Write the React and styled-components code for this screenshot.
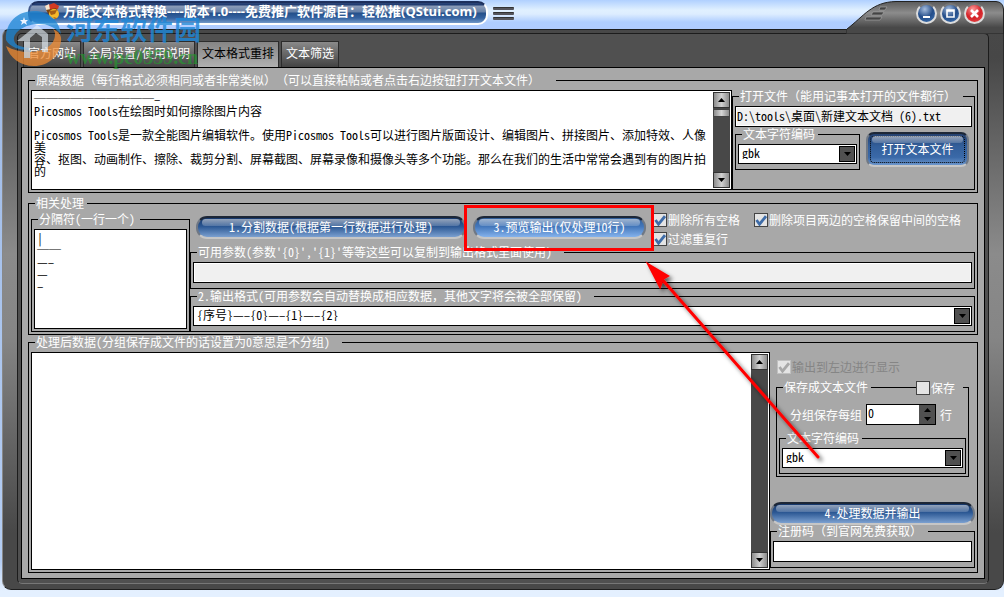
import React from "react";
import styled, { createGlobalStyle, css } from "styled-components";

const Global = createGlobalStyle`
  * { box-sizing: border-box; }
  html, body { margin: 0; padding: 0; }
  body { text-spacing-trim: space-all; }
  body, button, input, select, textarea {
    font-family: "Noto Sans Mono CJK SC", "Noto Sans CJK SC", monospace;
    font-size: 12px;
    line-height: 12px;
  }
`;

const Desktop = styled.div`
  position: relative;
  display: flex;
  flex-direction: column;
  min-height: 100vh;
  padding: 0 0 7px 2px;
  background:
    linear-gradient(180deg, #b0d0ff 0, #e0f0ff 10px, #ddedff 14px, #b0ceff 22px, #b0ccff 29px, transparent 29px),
    linear-gradient(180deg, #9db9e6 0, #b4cdf3 94%, #e4f0ff 99%);
  overflow: hidden;
`;

const TitleBar = styled.header`
  position: relative;
  display: flex;
  align-items: flex-start;
  height: 29px;
  padding: 1px 19px 0 26px;
`;

const TitlePill = styled.h1`
  display: flex;
  align-items: center;
  width: 460px;
  height: 24px;
  margin: 0;
  padding: 0 0 4px 14px;
  gap: 3px;
  border: 2px solid #fff;
  border-top-color: #1d2f5c;
  border-left-color: #42598c;
  border-radius: 10px;
  background: linear-gradient(180deg, #2c4577 0, #1e3a70 2px, #8c9cb8 3px, #6580a8 9px, #244f8a 10px, #3462a0 15px, #7298c8 20px);
  color: #fff;
  font: bold 13px/16px "Open Sans", "Noto Sans CJK SC", sans-serif;
  white-space: nowrap;
`;

const MenuButton = styled.button`
  display: flex;
  flex-direction: column;
  gap: 2px;
  width: 21px;
  margin: 6px 0 0 5px;
  padding: 0;
  border: 0;
  background: none;
`;

const MenuBar = styled.span`
  height: 3px;
  border-radius: 1px;
  background: #55555c;
  border-top: 1px solid #333;
`;

const Wing = styled.svg`
  position: absolute;
  right: 0;
  top: 0;
  width: 158px;
  height: 34px;
`;

const Controls = styled.div`
  position: relative;
  display: flex;
  gap: 3px;
  margin: 2px 0 0 auto;
`;

const RoundButton = styled.button`
  width: 21px;
  height: 21px;
  padding: 0;
  border: 2px solid #dcdcdc;
  border-top-color: #777;
  border-radius: 50%;
  background: ${(p) =>
    p.$close
      ? "radial-gradient(circle at 40% 25%, #ff9a9a, #d32127 50%, #e84c4c)"
      : "radial-gradient(circle at 40% 25%, #a6bddd, #244d89 50%, #4278b8)"};
  svg { display: block; }
`;

const Frame = styled.div`
  flex: 1;
  display: flex;
  padding: 3px 14px 5px 14px;
  border: 1px solid #1e1e1e;
  border-left-color: #888;
  border-right: 1px solid #2b2b2b;
  border-radius: 7px 0 9px 9px;
  background: linear-gradient(180deg, #484848 0, #474747 5%, #8b8b8b 40%, #858585 55%, #484848 90%);
`;

const Inner = styled.main`
  flex: 1;
  min-width: 0;
  display: flex;
  flex-direction: column;
  padding: 7px 3px 4px;
  border: 1px solid #1c1c1c;
  border-bottom-color: #777;
  border-radius: 5px;
  background: #505050;
`;

const Tabs = styled.nav`
  display: flex;
  gap: 2px;
  padding-left: 2px;
`;

const Tab = styled.button`
  height: 26px;
  padding: 0 4px 3px;
  border: 1px solid #2c2c2c;
  border-bottom: 0;
  color: ${(p) => (p.$active ? "#000" : "#fff")};
  background: ${(p) =>
    p.$active
      ? "linear-gradient(180deg, #858585, #b0b0b0)"
      : "linear-gradient(180deg, #8a8a8a, #6c6c6c 40%, #434343)"};
  white-space: nowrap;
`;

const Page = styled.section`
  flex: 1;
  display: flex;
  flex-direction: column;
  padding: 6px 6px 5px;
  border: 1px solid #000;
  background: #a8a8a8;
`;

const Group = styled.fieldset`
  position: relative;
  min-width: 0;
  margin: 0;
  padding: 4px 2px ${(p) => (p.$roomy ? 5 : 2)}px;
  border: 1px solid #000;
  ${(p) => p.$width && css`width: ${p.$width}px;`}
  ${(p) => p.$grow && css`flex: 1;`}
  ${(p) => p.$below && css`margin-bottom: ${p.$below}px;`}
`;

const Legend = styled.legend`
  height: 12px;
  margin-left: 4px;
  padding: 0 ${(p) => p.$tail || 3}px 0 1px;
  color: #fff;
  white-space: nowrap;
`;

const Row = styled.div`
  display: flex;
  height: 100%;
`;

const Column = styled.div`
  display: flex;
  flex-direction: column;
  min-width: 0;
  ${(p) => p.$grow && css`flex: 1;`}
  ${(p) => p.$width && css`width: ${p.$width}px;`}
`;

const TextPane = styled.div`
  flex: 1;
  display: flex;
  min-width: 0;
  min-height: ${(p) => p.$height || 0}px;
  padding: 1px;
  border: 1px solid #000;
  background: #fff;
`;

const TextArea = styled.textarea`
  flex: 1;
  min-width: 0;
  padding: 1px;
  border: 0;
  outline: 0;
  resize: none;
  overflow: hidden;
  white-space: pre;
  color: #000;
  background: #fff;
`;

const Scroll = styled.div`
  display: flex;
  flex-direction: column;
  justify-content: space-between;
  width: 17px;
  background: #484848;
`;

const ScrollTop = styled.div`
  display: flex;
  flex-direction: column;
  gap: 1px;
`;

const ScrollButton = styled.button`
  display: flex;
  align-items: center;
  justify-content: center;
  width: 17px;
  height: 16px;
  padding: 0;
  border: 1px solid #333;
  background: linear-gradient(90deg, #8c8c8c, #d0d0d0 50%, #8c8c8c);
`;

const Thumb = styled.div`
  height: 8px;
  border: 1px solid #444;
  background: linear-gradient(90deg, #8c8c8c, #d6d6d6 50%, #8c8c8c);
`;

const Input = styled.input`
  width: 100%;
  height: 21px;
  padding: 0 1px 2px;
  border: 1px solid #000;
  border-radius: 0;
  outline: 1px solid #fff;
  outline-offset: -2px;
  color: #000;
  background: ${(p) => (p.readOnly ? "#f0f0f0" : "#fff")};
`;

const SelectBox = styled.div`
  position: relative;
  height: 20px;
`;

const Select = styled.select`
  appearance: none;
  display: block;
  width: 100%;
  height: 20px;
  padding: 0 20px 2px 3px;
  border: 1px solid #000;
  border-radius: 0;
  color: #000;
  background: #fff;
`;

const DropMark = styled.span`
  position: absolute;
  top: 2px;
  right: 2px;
  display: flex;
  align-items: center;
  justify-content: center;
  width: 16px;
  height: 16px;
  border: 1px solid #000;
  background: #505050;
  pointer-events: none;
`;

const GlossButton = styled.button`
  position: relative;
  height: ${(p) => (p.$tall ? 35 : 23)}px;
  ${(p) => p.$width && css`width: ${p.$width}px;`}
  padding: 0 0 2px;
  border: 2px solid #c6c6c6;
  border-top-color: #1d2737;
  border-left-color: #6f7885;
  border-right-color: #6f7885;
  border-radius: ${(p) => (p.$tall ? 8 : 11)}px;
  color: #fff;
  white-space: nowrap;
  background: ${(p) =>
    p.$light
      ? "linear-gradient(180deg, #2f5d99, #4377bb 45%, #84b2ec)"
      : p.$tall
      ? "linear-gradient(180deg, #24406f, #335f9b 40%, #3a69a8 75%, #6c96cc)"
      : "linear-gradient(180deg, #16386c, #2c5894 45%, #7ba0d0)"};
  &::before {
    content: "";
    position: absolute;
    left: 4px;
    right: 4px;
    top: ${(p) => (p.$tall ? 2 : 1)}px;
    height: 7px;
    border-radius: 4px;
    background: linear-gradient(180deg, #ffffff88, #ffffff30);
  }
  ${(p) => p.$tall && css`
    outline: 1px dotted #000;
    outline-offset: -5px;
  `}
  span { position: relative; }
`;

const Actions = styled.div`
  display: flex;
  align-items: flex-start;
  height: 33px;
  padding-left: 6px;
`;

const ActionSlot = styled.div`
  position: relative;
  margin: 3px 7px 0 0;
`;

const Highlight = styled.span`
  position: absolute;
  z-index: 2;
  inset: -11px -8px -12px -9px;
  border: 3px solid #f00;
  pointer-events: none;
`;

const Checks = styled.div`
  display: grid;
  grid-template-columns: 87px auto;
  gap: 5px 14px;
`;

const CheckLabel = styled.label`
  display: flex;
  align-items: center;
  gap: 1px;
  height: 14px;
  color: ${(p) => (p.$disabled ? "#858585" : "#fff")};
  white-space: nowrap;
  ${(p) => p.$indent && css`margin: 8px 0 7px 7px;`}
`;

const tick = `url("data:image/svg+xml,%3Csvg xmlns='http://www.w3.org/2000/svg' viewBox='0 0 12 12'%3E%3Cpath d='M1.5 6l3 4.2L11 2.2' fill='none' stroke='COLOR' stroke-width='2.8'/%3E%3C/svg%3E")`;

const Check = styled.input`
  appearance: none;
  flex: none;
  width: 14px;
  height: 14px;
  margin: 0;
  border: 1px solid #444;
  background-color: #e4e4e4;
  &:checked { background-image: ${tick.replace("COLOR", "%233e6ca8")}; }
  &:disabled {
    border-color: #c0c0c0;
    background-image: ${tick.replace("COLOR", "%23a8a8a8")};
  }
`;

const SaveToggle = styled(CheckLabel)`
  position: absolute;
  right: 5px;
  top: -12px;
  padding-right: 8px;
  background: #a8a8a8;
`;

const SpinRow = styled.label`
  display: flex;
  align-items: center;
  height: 21px;
  margin: 7px 0;
  padding-left: 11px;
  gap: 4px;
  color: #fff;
`;

const Spin = styled.span`
  display: flex;
  width: 70px;
  height: 21px;
  border: 1px solid #000;
  background: #fff;
  input {
    flex: 1;
    min-width: 0;
    padding: 0 1px 4px;
    border: 0;
    outline: 0;
  }
`;

const SpinMark = styled.span`
  display: flex;
  flex-direction: column;
  align-items: center;
  justify-content: space-around;
  width: 16px;
  background: #505050;
`;

const OpenRow = styled.div`
  display: flex;
  gap: 6px;
  padding-top: 1px;
`;

const OpenSlot = styled.div`
  padding-top: 4px;
`;

const SaveBox = styled.div`
  margin: 0 6px 25px;
`;

const Arrow = styled.svg`
  position: absolute;
  z-index: 3;
  left: 640px;
  top: 255px;
  width: 190px;
  height: 215px;
  pointer-events: none;
`;

const Watermark = styled.div`
  position: absolute;
  z-index: 4;
  left: 5px;
  top: 10px;
  display: flex;
  gap: 4px;
  pointer-events: none;
`;

const MarkName = styled.div`
  height: 38px;
  color: #1e87d8d0;
  font: bold 27px/38px "Noto Sans CJK SC", sans-serif;
  white-space: nowrap;
`;

const MarkSite = styled.div`
  color: #239a2fa8;
  font: bold 20px/18px "Liberation Serif", serif;
`;

const Tri = ({ up }) => (
  <svg width="7" height="4" viewBox="0 0 7 4" aria-hidden="true">
    <path d={up ? "M0 4L3.5 0L7 4Z" : "M0 0L3.5 4L7 0Z"} fill="#000" />
  </svg>
);

const ScrollBar = ({ thumb }) => (
  <Scroll>
    <ScrollTop>
      <ScrollButton aria-label="向上"><Tri up /></ScrollButton>
      {thumb && <Thumb />}
    </ScrollTop>
    <ScrollButton aria-label="向下"><Tri /></ScrollButton>
  </Scroll>
);

const DropDown = ({ label, value }) => (
  <SelectBox>
    <Select aria-label={label} defaultValue={value}>
      <option>{value}</option>
    </Select>
    <DropMark><Tri /></DropMark>
  </SelectBox>
);

const CheckBox = ({ label, as: Label = CheckLabel, indent, ...rest }) => (
  <Label $disabled={rest.disabled} $indent={indent}>
    <Check type="checkbox" {...rest} />
    {label}
  </Label>
);

const SOURCE = [
  "─".repeat(10) + "–",
  "Picosmos Tools在绘图时如何擦除图片内容",
  "",
  "Picosmos Tools是一款全能图片编辑软件。使用Picosmos Tools可以进行图片版面设计、编辑图片、拼接图片、添加特效、人像",
  "美",
  "容、抠图、动画制作、擦除、裁剪分割、屏幕截图、屏幕录像和摄像头等多个功能。那么在我们的生活中常常会遇到有的图片拍",
  "的",
].join("\n");

const SEPARATORS = "|\n──\n—–\n—\n–";

export default function App() {
  return (
    <>
      <Global />
      <Desktop>
        <TitleBar>
          <Wing viewBox="0 0 158 34" aria-hidden="true">
            <defs>
              <linearGradient id="wing" x1="0" y1="0" x2="0" y2="1">
                <stop offset="0" stopColor="#5a5a5a" />
                <stop offset="0.35" stopColor="#8c8c8c" />
                <stop offset="0.8" stopColor="#484848" />
              </linearGradient>
            </defs>
            <path d="M0 30L1 29C18 16 26 2 50 1.500H150Q157 2 157.500 9V34H0Z" fill="url(#wing)" stroke="#222" />
            <path d="M34 7h7l-2 3h-6zM27 12h11l-2 3h-11zM20 17h16l-2 3h-15z" fill="#444" stroke="#aaa" strokeWidth="0.6" />
          </Wing>
          <TitlePill>
            <svg width="16" height="18" viewBox="0 0 16 18" aria-hidden="true">
              <path d="M1 4L10 1l5 3-1 3-10 2z" fill="#d33a22" />
              <path d="M1 4l4-2 1 6-3 2z" fill="#f4e5cf" />
              <path d="M2 8l10-2 2 3-9 4z" fill="#7a4514" />
              <circle cx="10" cy="12" r="5" fill="#f5b82a" />
              <path d="M5 9l8-1-2 4-4 1zM9 15l4 1-2 1z" fill="#a65f14" />
            </svg>
            万能文本格式转换----版本1.0----免费推广软件源自：轻松推(QStui.com)
          </TitlePill>
          <MenuButton aria-label="菜单"><MenuBar /><MenuBar /><MenuBar /></MenuButton>
          <Controls>
            <RoundButton aria-label="最小化">
              <svg width="17" height="17" viewBox="0 0 17 17"><path d="M5 11h7v2H5z" fill="#fff" /></svg>
            </RoundButton>
            <RoundButton aria-label="最大化">
              <svg width="17" height="17" viewBox="0 0 17 17"><path d="M5 5h7v7H5zM5 6h7" fill="none" stroke="#fff" strokeWidth="1.6" /></svg>
            </RoundButton>
            <RoundButton $close aria-label="关闭">
              <svg width="17" height="17" viewBox="0 0 17 17"><path d="M5 5l7 7M12 5l-7 7" stroke="#fff" strokeWidth="2.600" /></svg>
            </RoundButton>
          </Controls>
        </TitleBar>

        <Frame>
          <Inner>
            <Tabs>
              <Tab>官方网站</Tab>
              <Tab>全局设置/使用说明</Tab>
              <Tab $active>文本格式重排</Tab>
              <Tab>文本筛选</Tab>
            </Tabs>
            <Page>
              <Group $below={4}>
                <Legend $tail={16}>原始数据（每行格式必须相同或者非常类似）（可以直接粘帖或者点击右边按钮打开文本文件）</Legend>
                <Row>
                  <TextPane $height={100}>
                    <TextArea aria-label="原始数据" defaultValue={SOURCE} />
                    <ScrollBar thumb />
                  </TextPane>
                  <Group $width={243}>
                    <Legend $tail={7}>打开文件（能用记事本打开的文件都行）</Legend>
                    <Input aria-label="打开文件" readOnly value="D:\tools\桌面\新建文本文档 (6).txt" />
                    <OpenRow>
                      <Group $width={125} $roomy>
                        <Legend>文本字符编码</Legend>
                        <DropDown label="文本字符编码" value="gbk" />
                      </Group>
                      <OpenSlot>
                        <GlossButton $tall $width={103}><span>打开文本文件</span></GlossButton>
                      </OpenSlot>
                    </OpenRow>
                  </Group>
                </Row>
              </Group>

              <Group $below={1}>
                <Legend>相关处理</Legend>
                <Row>
                  <Group $width={159}>
                    <Legend $tail={5}>分隔符(一行一个)</Legend>
                    <Row>
                      <TextPane>
                        <TextArea aria-label="分隔符" defaultValue={SEPARATORS} />
                      </TextPane>
                    </Row>
                  </Group>
                  <Column $grow>
                    <Actions>
                      <ActionSlot>
                        <GlossButton $width={270}><span>1.分割数据(根据第一行数据进行处理)</span></GlossButton>
                      </ActionSlot>
                      <ActionSlot>
                        <GlossButton $light $width={173}><span>3.预览输出(仅处理10行)</span></GlossButton>
                        <Highlight />
                      </ActionSlot>
                      <Checks>
                        <CheckBox label="删除所有空格" defaultChecked />
                        <CheckBox label="删除项目两边的空格保留中间的空格" defaultChecked />
                        <CheckBox label="过滤重复行" defaultChecked />
                      </Checks>
                    </Actions>
                    <Group $roomy $below={1}>
                      <Legend $tail={12}>可用参数(参数'{"{0}"}','{"{1}"}'等等这些可以复制到输出格式里面使用)</Legend>
                      <Input aria-label="可用参数" readOnly value="" />
                    </Group>
                    <Group $roomy>
                      <Legend $tail={12}>2.输出格式(可用参数会自动替换成相应数据，其他文字将会被全部保留)</Legend>
                      <DropDown label="输出格式" value="{序号}—–{0}—–{1}—–{2}" />
                    </Group>
                  </Column>
                </Row>
              </Group>

              <Group $grow>
                <Legend $tail={12}>处理后数据(分组保存成文件的话设置为0意思是不分组)</Legend>
                <Row>
                  <TextPane>
                    <TextArea aria-label="处理后数据" defaultValue="" />
                    <ScrollBar />
                  </TextPane>
                  <Column $width={205}>
                    <CheckBox label="输出到左边进行显示" indent disabled defaultChecked />
                    <SaveBox>
                      <Group>
                        <Legend>保存成文本文件</Legend>
                        <CheckBox as={SaveToggle} label="保存" />
                        <SpinRow>
                          分组保存每组
                          <Spin>
                            <input defaultValue="0" />
                            <SpinMark><Tri up /><Tri /></SpinMark>
                          </Spin>
                          行
                        </SpinRow>
                        <Group $roomy>
                          <Legend>文本字符编码</Legend>
                          <DropDown label="保存文件的字符编码" value="gbk" />
                        </Group>
                      </Group>
                    </SaveBox>
                    <GlossButton><span>4.处理数据并输出</span></GlossButton>
                    <Group $roomy>
                      <Legend $tail={6}>注册码（到官网免费获取）</Legend>
                      <Input aria-label="注册码" />
                    </Group>
                  </Column>
                </Row>
              </Group>
            </Page>
          </Inner>
        </Frame>

        <Arrow viewBox="0 0 190 215" aria-hidden="true">
          <defs>
            <filter id="shade" x="-10%" y="-10%" width="125%" height="125%">
              <feDropShadow dx="3" dy="3" stdDeviation="2" floodColor="#000" floodOpacity="0.6" />
            </filter>
          </defs>
          <g filter="url(#shade)">
            <path d="M20 22L178 202" stroke="#f00" strokeWidth="3" strokeLinecap="round" />
            <path d="M8 9L28 21L23 24L20 32Z" fill="#f00" stroke="#f00" strokeWidth="2" />
          </g>
        </Arrow>

        <Watermark>
          <svg width="57" height="57" viewBox="0 0 57 57" opacity="0.75" aria-hidden="true">
            <path d="M1 30C0 12 13 1 29 1C42 1 54 9 56 24C50 17 42 14 34 14C20 14 8 22 9 30C10 36 17 37 24 38V40C14 40 5 37 1 30Z" fill="#1c86d4" />
            <path d="M1 36C8 40 16 42 24 42C38 42 50 36 50 24C50 22 49 20 48 19C54 22 57 26 56 31C54 46 44 56 29 56C15 56 5 48 1 36Z" fill="#f08a30" />
            <path d="M12 31L32 15L43 24V42H37V27L31 23L25 28V48H19V31Z" fill="#e8f3fb" opacity="0.8" />
            <path d="M19 7l1 3 3 0-2 2 1 3-3-2-3 2 1-3-2-2h3z" fill="#fff" />
          </svg>
          <div>
            <MarkName>河东软件园</MarkName>
            <MarkSite>www.pc0359.cn</MarkSite>
          </div>
        </Watermark>
      </Desktop>
    </>
  );
}
